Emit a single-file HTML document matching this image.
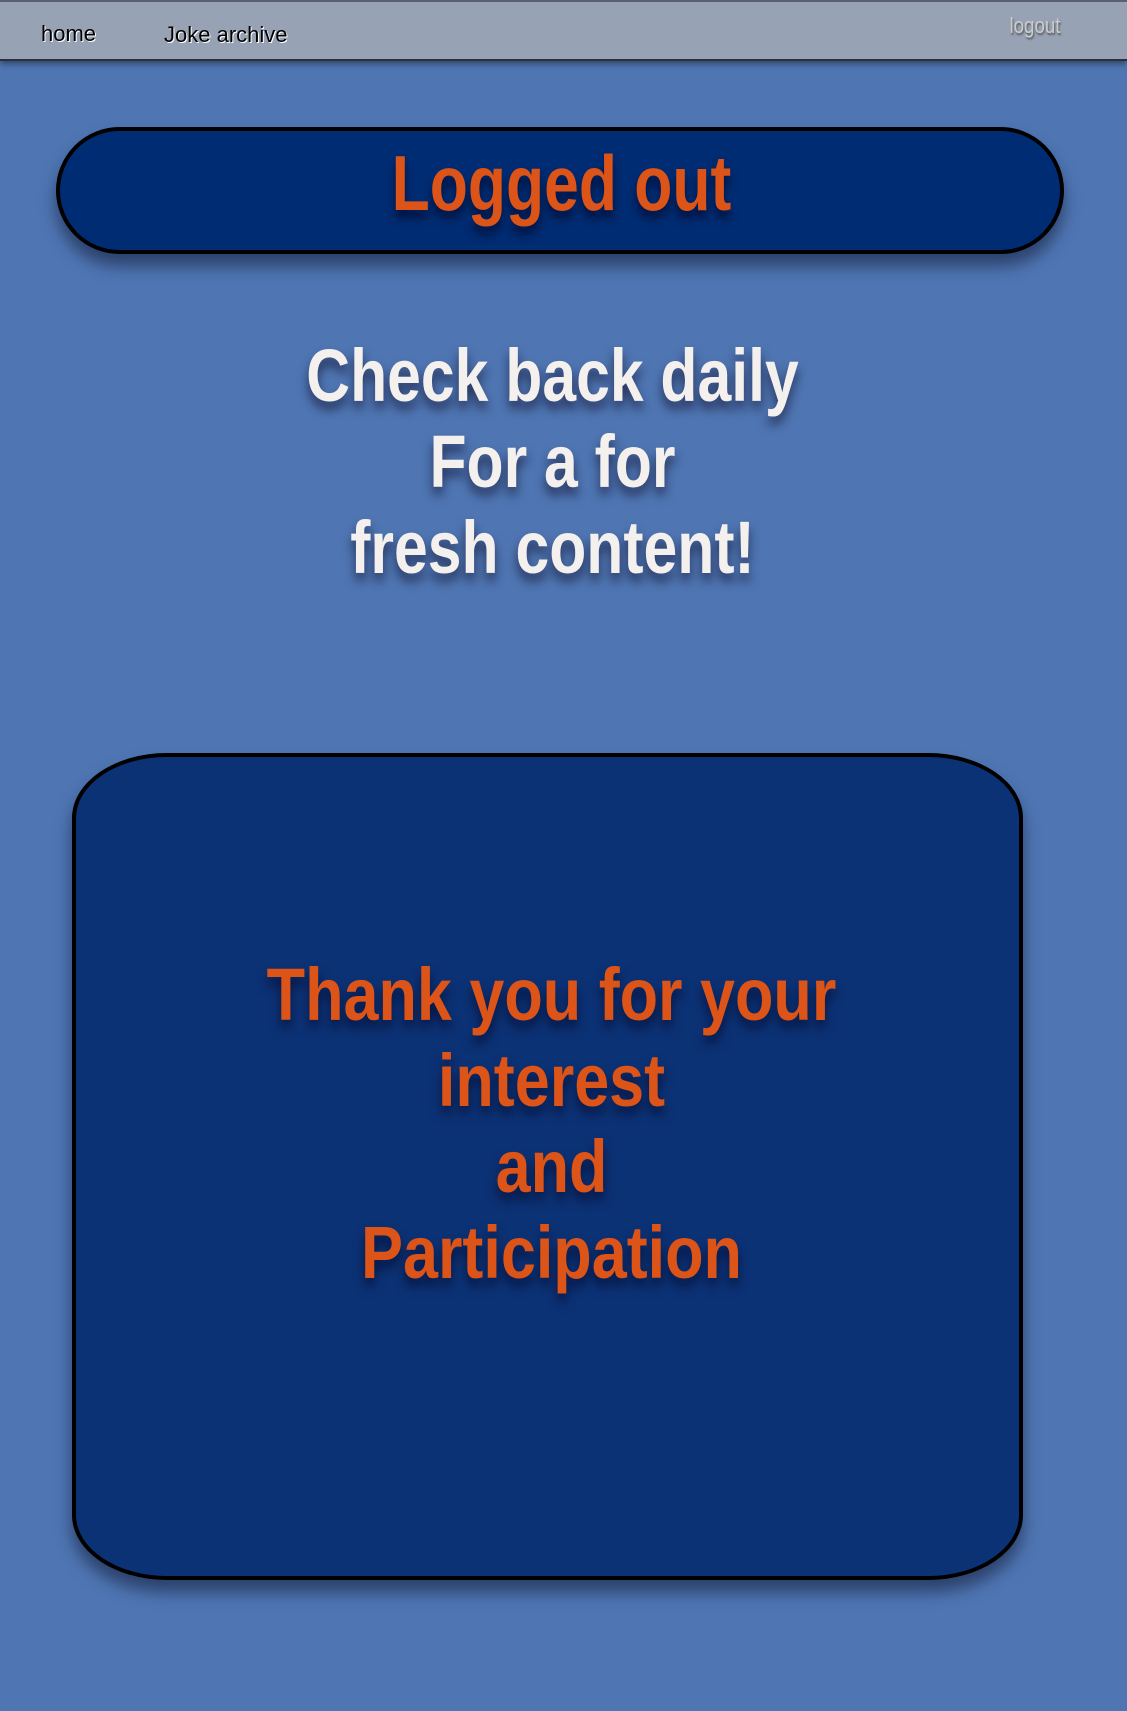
<!DOCTYPE html>
<html><head><meta charset="utf-8"><style>
body{margin:0;width:1127px;height:1711px;background:#4f76b3;overflow:hidden;position:relative;font-family:"Liberation Sans",sans-serif;}
.nav{position:absolute;left:0;top:0;width:1127px;height:61px;background:#97a3b5;border-top:2px solid #5a6070;border-bottom:2px solid #2a2f3a;box-shadow:0 3px 6px rgba(0,0,0,.4);box-sizing:border-box;}
.nav span{position:absolute;font-family:"Liberation Sans",sans-serif;font-size:22px;color:#000;text-shadow:1px 1px 0 #fff;}
.box1{position:absolute;left:56px;top:127px;width:1008px;height:127px;border:4px solid #000;border-radius:64px;background:#002c73;box-sizing:border-box;box-shadow:0 12px 16px rgba(20,30,60,.6);}
.box2{position:absolute;left:72px;top:753px;width:951px;height:827px;border:4px solid #000;border-radius:95px/65px;background:#0c3276;box-sizing:border-box;box-shadow:0 12px 16px rgba(20,30,60,.6);}
.t{position:absolute;left:-11px;width:1127px;text-align:center;font-weight:bold;transform:scaleX(.82);}
</style></head><body>
<div class="nav">
<span style="left:41px;top:19px">home</span>
<span style="left:164px;top:20px">Joke archive</span>
<span style="left:1005px;top:11px;color:#ccc;text-shadow:1px 2px 2px #555;transform:scaleX(.85)">logout</span>
</div>
<div class="box1"></div>
<div class="t" style="left:-2px;top:138px;font-size:78px;line-height:90px;color:#dc5418;transform:scaleX(.8);text-shadow:0 8px 10px rgba(0,0,30,.6)">Logged out</div>
<div class="t" style="top:333px;font-size:74px;line-height:86px;color:#f4f0ee;text-shadow:0 8px 12px rgba(20,20,50,.7)">Check back daily<br>For a for<br>fresh content!</div>
<div class="box2"></div>
<div class="t" style="left:-12px;top:952px;font-size:74px;line-height:86px;color:#dc5418;transform:scaleX(.85);text-shadow:0 8px 12px rgba(0,0,30,.6)">Thank you for your<br>interest<br>and<br>Participation</div>
</body></html>
